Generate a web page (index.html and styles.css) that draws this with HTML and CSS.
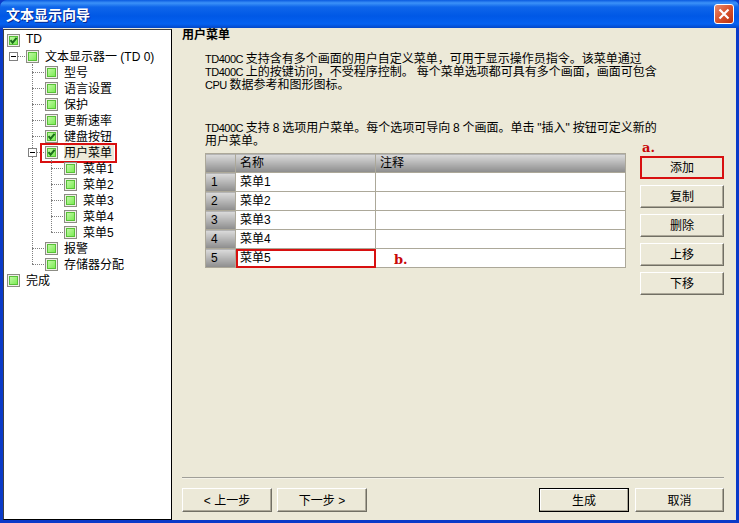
FILE: index.html
```html
<!DOCTYPE html>
<html lang="zh-CN">
<head>
    <meta charset="UTF-8">
    <meta name="viewport" content="width=device-width, initial-scale=1.0">
    <title>文本显示向导</title>
    <link rel="stylesheet" href="styles.css">
</head>
<body>
    <svg class="defs" width="0" height="0">
        <linearGradient id="lime" x1="0" y1="0" x2="1" y2="1">
            <stop offset="0" stop-color="#c4f8a8"/>
            <stop offset="1" stop-color="#78ec50"/>
        </linearGradient>
        <symbol id="box" viewBox="0 0 13 13">
            <rect x="0.5" y="0.5" width="12" height="12" fill="#f0f0e8" stroke="#8c8c84"/>
            <rect x="2.5" y="2.5" width="8" height="8" fill="url(#lime)" stroke="#58c038"/>
        </symbol>
        <symbol id="box-on" viewBox="0 0 13 13">
            <rect x="0.5" y="0.5" width="12" height="12" fill="#f0f0e8" stroke="#8c8c84"/>
            <rect x="2.5" y="2.5" width="8" height="8" fill="url(#lime)" stroke="#58c038"/>
            <path d="M3.5 6.2 L5.6 8.6 L9.6 3.8" fill="none" stroke="#1c6e1c" stroke-width="2"/>
        </symbol>
    </svg>

    <div class="window">
        <div class="titlebar">
            <span class="title">文本显示向导</span>
            <button class="close" aria-label="关闭">
                <svg width="12" height="12" viewBox="0 0 12 12"><path d="M1.5 1.5 L10.5 10.5 M10.5 1.5 L1.5 10.5" stroke="#fff" stroke-width="2.2"/></svg>
            </button>
        </div>

        <div class="content">
            <!-- wizard steps -->
            <div class="tree">
                <ul>
                    <li><div class="row"><svg class="box"><use href="#box-on"/></svg>TD</div></li>
                    <li>
                        <ul class="branch">
                            <li>
                                <div class="row"><i class="toggle"></i><svg class="box"><use href="#box"/></svg>文本显示器一 (TD 0)</div>
                                <ul class="branch">
                                    <li><div class="row"><svg class="box"><use href="#box"/></svg>型号</div></li>
                                    <li><div class="row"><svg class="box"><use href="#box"/></svg>语言设置</div></li>
                                    <li><div class="row"><svg class="box"><use href="#box"/></svg>保护</div></li>
                                    <li><div class="row"><svg class="box"><use href="#box"/></svg>更新速率</div></li>
                                    <li><div class="row"><svg class="box"><use href="#box-on"/></svg>键盘按钮</div></li>
                                    <li>
                                        <div class="row marked"><i class="toggle"></i><svg class="box"><use href="#box-on"/></svg><span class="selected">用户菜单</span></div>
                                        <ul class="branch">
                                            <li><div class="row"><svg class="box"><use href="#box"/></svg>菜单1</div></li>
                                            <li><div class="row"><svg class="box"><use href="#box"/></svg>菜单2</div></li>
                                            <li><div class="row"><svg class="box"><use href="#box"/></svg>菜单3</div></li>
                                            <li><div class="row"><svg class="box"><use href="#box"/></svg>菜单4</div></li>
                                            <li><div class="row"><svg class="box"><use href="#box"/></svg>菜单5</div></li>
                                        </ul>
                                    </li>
                                    <li><div class="row"><svg class="box"><use href="#box"/></svg>报警</div></li>
                                    <li><div class="row"><svg class="box"><use href="#box"/></svg>存储器分配</div></li>
                                </ul>
                            </li>
                        </ul>
                    </li>
                    <li><div class="row"><svg class="box"><use href="#box"/></svg>完成</div></li>
                </ul>
            </div>

            <div class="main">
                <h2>用户菜单</h2>
                <p class="intro"><span class="lat">TD400C</span> 支持含有多个画面的用户自定义菜单，可用于显示操作员指令。该菜单通过<br><span class="lat">TD400C</span> 上的按键访问，不受程序控制。 每个菜单选项都可具有多个画面，画面可包含<br><span class="lat">CPU</span> 数据参考和图形图标。</p>
                <p class="intro second"><span class="lat">TD400C</span> 支持 8 选项用户菜单。每个选项可导向 8 个画面。单击 "插入" 按钮可定义新的<br>用户菜单。</p>

                <div class="editor">
                    <table class="grid">
                        <thead>
                            <tr><th class="num"></th><th class="name">名称</th><th>注释</th></tr>
                        </thead>
                        <tbody>
                            <tr><th class="num">1</th><td>菜单1</td><td></td></tr>
                            <tr><th class="num">2</th><td>菜单2</td><td></td></tr>
                            <tr><th class="num">3</th><td>菜单3</td><td></td></tr>
                            <tr><th class="num">4</th><td>菜单4</td><td></td></tr>
                            <tr><th class="num">5</th><td class="active">菜单5</td><td class="note"><span class="mark mark-b">b.</span></td></tr>
                        </tbody>
                    </table>
                    <div class="actions">
                        <span class="mark mark-a">a.</span>
                        <button class="btn add">添加</button>
                        <button class="btn">复制</button>
                        <button class="btn">删除</button>
                        <button class="btn">上移</button>
                        <button class="btn">下移</button>
                    </div>
                </div>

                <div class="footer">
                    <button class="btn wide">&lt; 上一步</button>
                    <button class="btn wide">下一步 &gt;</button>
                    <span class="spacer"></span>
                    <button class="btn wide default">生成</button>
                    <button class="btn wide cancel">取消</button>
                </div>
            </div>
        </div>
    </div>
</body>
</html>
```

FILE: styles.css
```css
* {
    box-sizing: border-box;
}
html, body {
    margin: 0;
    height: 100%;
    overflow: hidden;
}
body {
    font-family: "Liberation Sans", "Noto Sans CJK SC", sans-serif;
    font-size: 12px;
    color: #000;
    background-color: #0a3ac8;
}
.defs {
    position: absolute;
}
.window {
    display: flex;
    flex-direction: column;
    height: 523px;
    width: 739px;
    border-radius: 7px 7px 0 0;
    overflow: hidden;
    background-color: #0a3ac8;
}
.titlebar {
    display: flex;
    align-items: center;
    justify-content: space-between;
    height: 28px;
    padding: 0 5px 0 6px;
    background: linear-gradient(to bottom, #0a5ae0 0, #3c92f8 3px, #0f66ea 7px, #0058e6 16px, #0561f0 24px, #0347c8 28px);
}
.title {
    color: #fff;
    font-size: 14px;
    font-weight: bold;
    text-shadow: 1px 1px 0 #0a2a90;
}
.close {
    display: flex;
    align-items: center;
    justify-content: center;
    width: 20px;
    height: 20px;
    padding: 0;
    border: 1px solid #fff;
    border-radius: 3px;
    background: linear-gradient(135deg, #e88c70, #d8532c 50%, #b83010);
}
.content {
    display: flex;
    flex: 1;
    min-height: 0;
    margin: 0 3px 3px 3px;
    background-color: #ece9d8;
}

/* tree on the left */
.tree {
    width: 169px;
    margin-top: 1px;
    padding-top: 2px;
    background-color: #fff;
    border: 1px solid #000;
    border-left-color: #404040;
    border-top-color: #404040;
}
.tree ul {
    list-style: none;
    margin: 0;
    padding: 0 0 0 3px;
}
.tree ul.branch {
    position: relative;
    padding-left: 19px;
}
.branch .branch::before {
    content: "";
    position: absolute;
    left: 6px;
    top: 0;
    bottom: 8px;
    border-left: 1px dotted #808080;
}
.row {
    position: relative;
    display: flex;
    align-items: center;
    height: 16px;
    padding-bottom: 2px;
    white-space: nowrap;
}
.branch > li > .row::before {
    content: "";
    position: absolute;
    left: -13px;
    width: 12px;
    top: 8px;
    border-top: 1px dotted #808080;
}
.box {
    flex: none;
    width: 13px;
    height: 13px;
    margin: 2px 6px 0 0;
}
.toggle {
    position: absolute;
    z-index: 1;
    left: -17px;
    top: 4px;
    width: 9px;
    height: 9px;
    border: 1px solid #808080;
    background: #fff linear-gradient(#000, #000) no-repeat center / 5px 1px;
}
.selected {
    background-color: #ece9d8;
    padding-right: 2px;
}
.marked::after {
    content: "";
    position: absolute;
    box-sizing: border-box;
    left: -5px;
    top: -1px;
    width: 77px;
    height: 20px;
    border: 2px solid #d81010;
}

/* right side */
.main {
    display: flex;
    flex-direction: column;
    flex: 1;
    min-width: 0;
    padding: 0 12px 8px 10px;
}
h2 {
    margin: 0;
    padding-top: 1px;
    font-size: 12px;
    line-height: 13px;
    font-weight: bold;
}
.intro {
    margin: 11px 0 0 23px;
    line-height: 13px;
    word-spacing: -0.5px;
    white-space: nowrap;
}
.intro.second {
    margin-top: 30px;
}
.lat {
    font-size: 11px;
    letter-spacing: -0.5px;
}
.editor {
    display: flex;
    justify-content: space-between;
    margin: 5px 0 0 23px;
}
.grid {
    width: 421px;
    height: 114px;
    table-layout: fixed;
    border-collapse: collapse;
    background-color: #fff;
    border: 1px solid #aca899;
}
.grid th, .grid td {
    height: 19px;
    padding: 0 0 1px 4px;
    line-height: 14px;
    border: 1px solid #aca899;
    font-weight: normal;
    text-align: left;
}
.grid th {
    background: linear-gradient(to bottom, #dcdcdc, #8c8c8c);
}
.grid th.num {
    width: 30px;
    padding-left: 5px;
}
.grid th.name {
    width: 140px;
}
.grid .note {
    position: relative;
    border-left-color: transparent;
}
.grid td.active {
    outline: 2px solid #d81010;
    outline-offset: -2px;
}
.mark {
    position: absolute;
    color: #c80808;
    font-family: "DejaVu Serif", serif;
    font-weight: bold;
    font-size: 13px;
    line-height: 14px;
}
.mark-a {
    top: -12px;
    left: 2px;
}
.mark-b {
    top: 4px;
    left: 18px;
}
.actions {
    position: relative;
    display: flex;
    flex-direction: column;
    gap: 6px;
    width: 84px;
    padding-top: 3px;
}
.btn {
    height: 23px;
    padding: 0 0 2px;
    font: inherit;
    color: #000;
    background-color: #ece9d8;
    border: 1px solid;
    border-color: #fff #716f64 #716f64 #fff;
    box-shadow: inset -1px -1px 0 #aca899;
}
.btn.add {
    border: 2px solid #d81010;
    box-shadow: none;
}
.footer {
    display: flex;
    gap: 5px;
    margin-top: auto;
    padding-top: 9px;
    border-top: 2px groove #f4f2e8;
}
.spacer {
    flex: 1;
}
.btn.wide {
    width: 90px;
    height: 24px;
}
.btn.default {
    border: 1px solid #000;
    margin-right: 1px;
    box-shadow: inset -1px -1px 0 #aca899, inset 1px 1px 0 #fff;
}
.btn.cancel {
    width: 89px;
}
```
